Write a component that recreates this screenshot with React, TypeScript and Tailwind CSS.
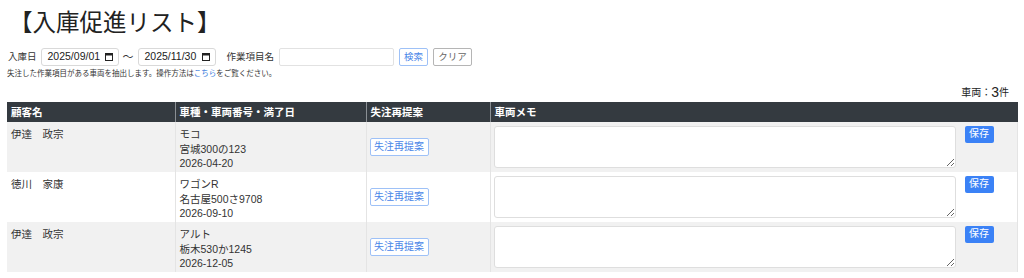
const rows = [
  { name: "伊達　政宗", car: "モコ", plate: "宮城300の123", date: "2026-04-20" },
  { name: "徳川　家康", car: "ワゴンR", plate: "名古屋500さ9708", date: "2026-09-10" },
  { name: "伊達　政宗", car: "アルト", plate: "栃木530か1245", date: "2026-12-05" },
];

function DateBox({ value }: { value: string }) {
  return (
    <div className="flex h-[18px] w-[78px] items-center justify-between rounded-[3px] border border-[#d9d9d9] bg-white pl-[6px] pr-[5px] text-[10.5px] text-[#222]">
      <span>{value}</span>
      <svg width="8" height="8" viewBox="0 0 8 8" className="text-[#222]">
        <rect x="0.5" y="0.5" width="7" height="7" fill="none" stroke="currentColor" />
        <rect x="0.5" y="0.5" width="7" height="2" fill="currentColor" />
      </svg>
    </div>
  );
}

export default function App() {
  return (
    <div
      className="min-h-[278px] bg-white pl-[7px] pr-[6px] pt-[9px] text-[#333]"
      style={{ fontFamily: '"Liberation Sans", "Noto Sans CJK JP", sans-serif' }}
    >
      <h1 className="ml-[2px] text-[23.5px] leading-[29px] text-[#222]">【入庫促進リスト】</h1>

      <div className="mt-[10px] flex h-[18px] items-center text-[9.5px]">
        <span className="ml-[1px]">入庫日</span>
        <div className="ml-[4px]">
          <DateBox value="2025/09/01" />
        </div>
        <span className="mx-[4px] text-[11px]">〜</span>
        <DateBox value="2025/11/30" />
        <span className="ml-[11px]">作業項目名</span>
        <input
          type="text"
          className="ml-[5px] h-[18px] w-[115px] rounded-[2px] border border-[#e2e2e2] bg-white"
        />
        <button className="ml-[5px] h-[18px] w-[29px] rounded-[2px] border border-[#9ec1f7] text-[9.5px] text-[#4a86e8]">
          検索
        </button>
        <button className="ml-[5px] h-[18px] w-[39px] rounded-[2px] border border-[#b5b5b5] text-[9.5px] text-[#666]">
          クリア
        </button>
      </div>

      <p className="mt-[2px] text-[7.5px] leading-[12px] text-[#333]">
        失注した作業項目がある車両を抽出します。操作方法は
        <span className="text-[#3b7ddd]">こちら</span>
        をご覧ください。
      </p>

      <div className="mt-[4px] flex h-[16px] items-end justify-end pr-[9px] text-[10px] leading-[14px] text-[#222]">
        車両：<span className="text-[14px] leading-[16px]">3</span>件
      </div>

      <table className="mt-[2px] w-[1011px] table-fixed border-collapse text-[10.5px] leading-[14.5px]">
        <colgroup>
          <col className="w-[168px]" />
          <col className="w-[191px]" />
          <col className="w-[124px]" />
          <col />
        </colgroup>
        <thead>
          <tr className="h-[20px] bg-[#343a40] text-left text-[10.5px] font-bold text-white">
            <th className="px-[4px]">顧客名</th>
            <th className="border-l border-[#8a8f94] px-[4px]">車種・車両番号・満了日</th>
            <th className="border-l border-[#8a8f94] px-[4px]">失注再提案</th>
            <th className="border-l border-[#8a8f94] px-[4px]">車両メモ</th>
          </tr>
        </thead>
        <tbody>
          {rows.map((r, i) => (
            <tr key={i} className={i % 2 === 0 ? "bg-[#f1f1f1]" : "bg-white"}>
              <td className="px-[4px] pt-[5px] align-top">{r.name}</td>
              <td className="border-l border-[#e4e4e4] px-[4px] pt-[5px] align-top">
                <div>{r.car}</div>
                <div>{r.plate}</div>
                <div>{r.date}</div>
              </td>
              <td className="border-l border-[#e4e4e4] px-[3px] align-middle">
                <button className="h-[18px] w-[59px] rounded-[2px] border border-[#9ec1f7] bg-white text-[10px] text-[#4a86e8]">
                  失注再提案
                </button>
              </td>
              <td className="border-x border-[#e4e4e4] px-[3px] py-[4px] align-top">
                <div className="flex items-start gap-[9px]">
                  <textarea className="h-[42px] w-[462px] rounded-[3px] border border-[#dedede] bg-white" />
                  <button className="h-[17px] w-[29px] rounded-[2px] bg-[#3b82f6] text-[10px] text-white">
                    保存
                  </button>
                </div>
              </td>
            </tr>
          ))}
        </tbody>
      </table>
    </div>
  );
}
